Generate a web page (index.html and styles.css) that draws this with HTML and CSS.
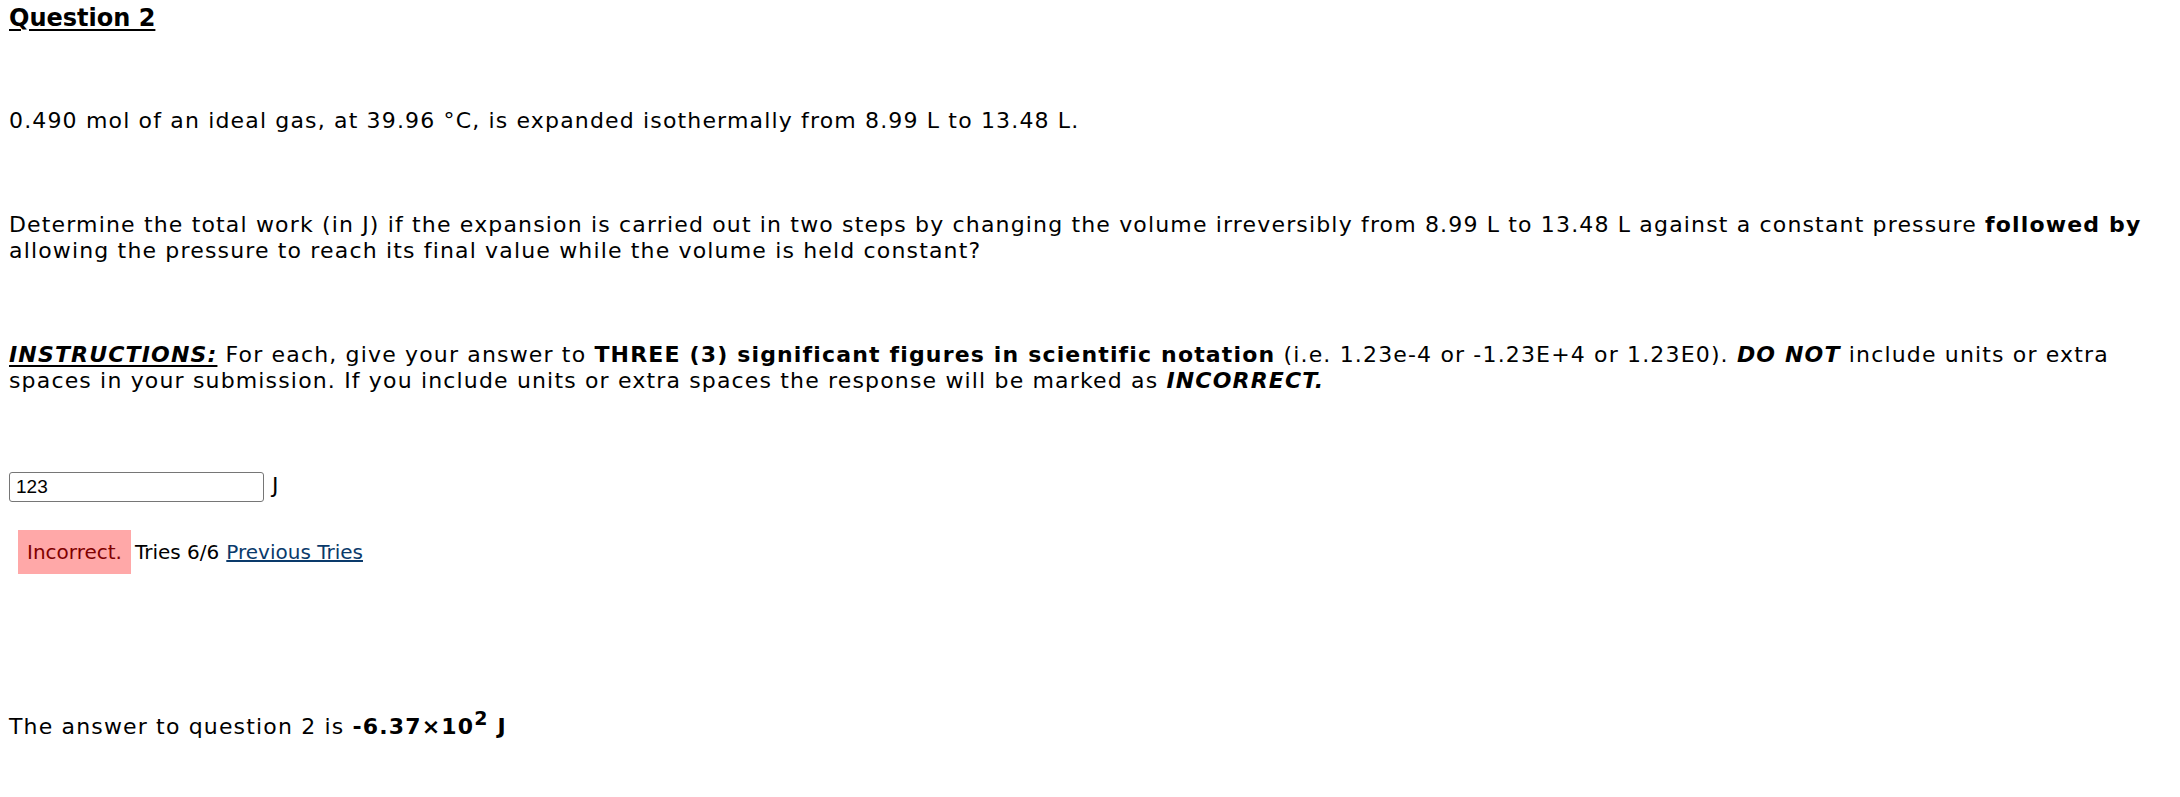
FILE: index.html
```html
<!DOCTYPE html>
<html>
<head>
<meta charset="utf-8">
<title>Question 2</title>
<link rel="stylesheet" href="styles.css">
</head>
<body>
<div class="page">
  <div class="heading">Question 2</div>
  <div class="para p1">0.490 mol of an ideal gas, at 39.96 °C, is expanded isothermally from 8.99 L to 13.48 L.</div>
  <div class="para p2">Determine the total work (in J) if the expansion is carried out in two steps by changing the volume irreversibly from 8.99 L to 13.48 L against a constant pressure <b>followed by</b> allowing the pressure to reach its final value while the volume is held constant?</div>
  <div class="para p3"><b class="bi u">INSTRUCTIONS:</b> For each, give your answer to <b>THREE (3) significant figures in scientific notation</b> (i.e. 1.23e-4 or -1.23E+4 or 1.23E0). <b class="bi">DO NOT</b> include units or extra spaces in your submission. If you include units or extra spaces the response will be marked as <b class="bi">INCORRECT.</b></div>
  <div class="answer-row"><input class="answer-input" type="text" value="123"><span class="unit">J</span></div>
  <div class="feedback"><span class="status">Incorrect.</span><span class="tries">Tries 6/6</span><a class="prev" href="#">Previous Tries</a></div>
  <div class="para final">The answer to question 2 is <b>-6.37×10<sup>2</sup> J</b></div>
</div>
</body>
</html>
```
FILE: styles.css
```css
html, body {
  margin: 0;
  padding: 0;
  background: #ffffff;
}
.page {
  padding: 3px 0 0 9px;
  font-family: "DejaVu Sans", Verdana, sans-serif;
  color: #000000;
}
.heading {
  font-size: 24px;
  line-height: 30px;
  font-weight: bold;
  text-decoration: underline;
  text-underline-offset: 3px;
  text-decoration-thickness: 2px;
}
.para {
  font-size: 22px;
  line-height: 26px;
  letter-spacing: 1.16px;
}
.p1 { margin-top: 75px; }
.p2 { margin-top: 78px; }
.p3 { margin-top: 78px; }
.bi { font-style: italic; }
.u { text-decoration: underline; text-decoration-thickness: 2px; text-underline-offset: 3px; }
.answer-row {
  margin-top: 78px;
  display: flex;
  align-items: baseline;
  gap: 8px;
  font-size: 22px;
  line-height: 26px;
}
.answer-input {
  box-sizing: border-box;
  width: 255px;
  height: 30px;
  margin: 0;
  padding: 0 6px;
  border: 1px solid #767676;
  border-radius: 3px;
  font-family: "Liberation Sans", Arial, sans-serif;
  font-size: 19px;
  color: #000000;
  background: #ffffff;
}
.feedback {
  margin-top: 28px;
  display: flex;
  align-items: baseline;
  font-size: 20px;
  line-height: 24px;
}
.status {
  margin-left: 9px;
  padding: 10px 9px;
  background: #ffa8a8;
  color: #800000;
}
.tries {
  margin-left: 4px;
}
.prev {
  margin-left: 7px;
  color: #0a3a6b;
  text-decoration: underline;
}
.final {
  margin-top: 140px;
}
sup {
  font-size: 19px;
  line-height: 0;
  vertical-align: 9px;
}
```
